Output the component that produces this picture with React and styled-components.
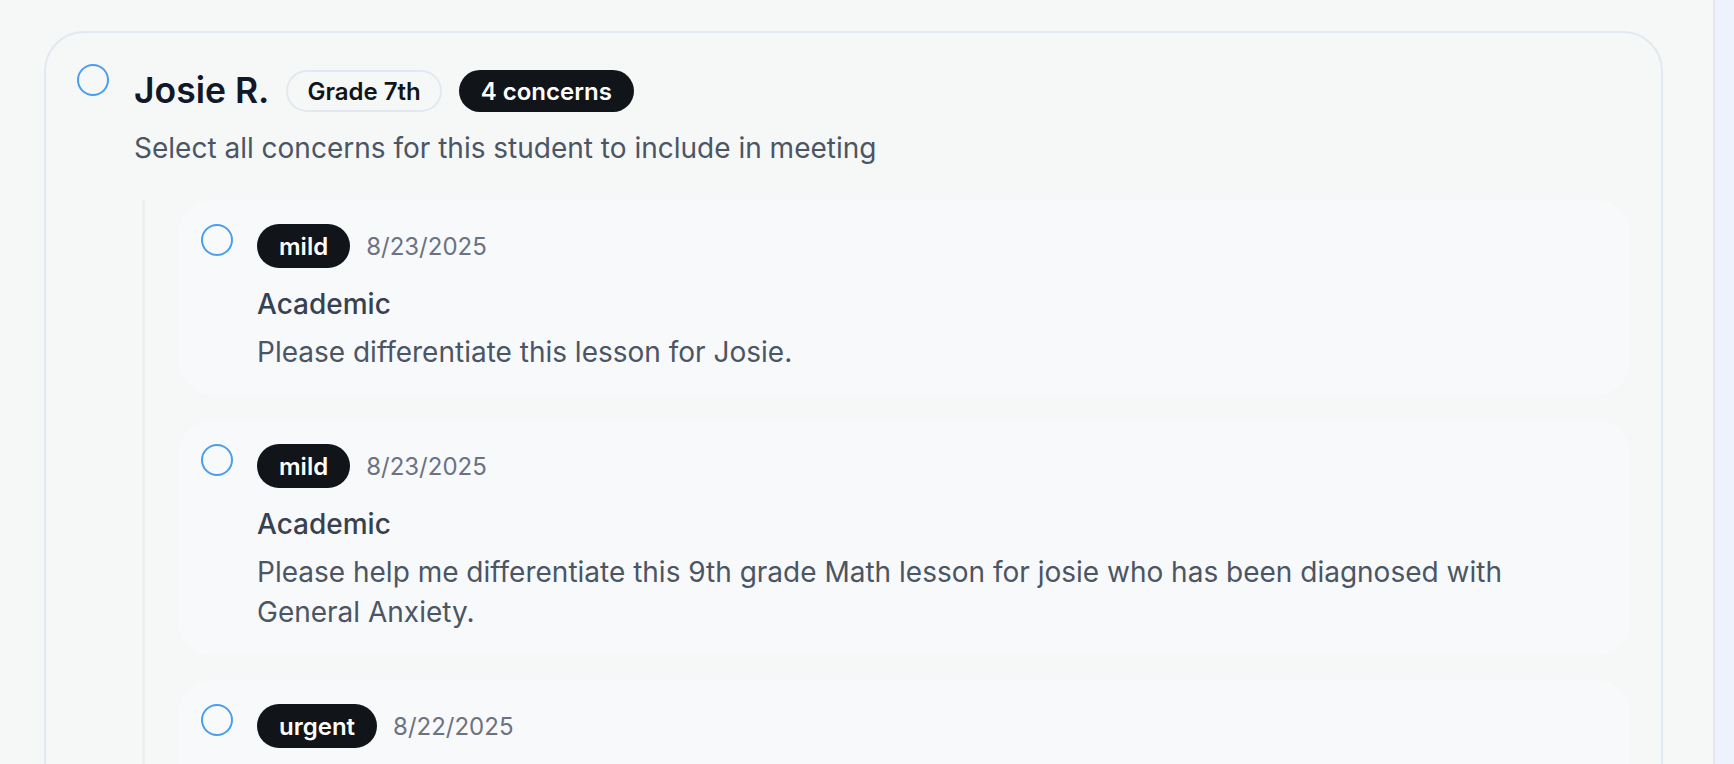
import React from 'react';
import styled, { createGlobalStyle } from 'styled-components';

const GlobalStyle = createGlobalStyle`
  html, body { margin: 0; padding: 0; height: 100%; overflow: hidden; }
  body {
    font-family: Inter, "Noto Sans", "Liberation Sans", sans-serif;
    background: #F6F8F8;
    -webkit-font-smoothing: antialiased;
  }
  #root { height: 100%; }
`;

const Page = styled.div`
  display: flex;
  height: 100vh;
  overflow: hidden;
  background: #F6F8F8;
`;

const Main = styled.main`
  flex: 1;
  min-width: 0;
  padding: 31px 50px 0 44px;
`;

const Aside = styled.aside`
  flex: none;
  width: 19px;
  background: #EEF2FC;
  border-left: 2px solid #E3E7EB;
`;

const StudentCard = styled.section`
  display: flex;
  align-items: flex-start;
  gap: 25px;
  border: 2px solid #E2E8EF;
  border-radius: 40px;
  padding: 31px 30px 31px 31px;
  background: #F6F8F8;
`;

const Radio = styled.span`
  flex: none;
  display: block;
  width: 32px;
  height: 32px;
  box-sizing: border-box;
  border: 2px solid #4A9EEE;
  border-radius: 50%;
`;

const StudentBody = styled.div`
  flex: 1;
  min-width: 0;
`;

const HeaderRow = styled.div`
  display: flex;
  align-items: center;
  gap: 17px;
  height: 54px;
`;

const Name = styled.h2`
  margin: 0;
  font-size: 35.5px;
  font-weight: 600;
  color: #111827;
  line-height: 54px;
`;

const Pill = styled.span`
  display: inline-flex;
  align-items: center;
  box-sizing: border-box;
  height: ${(p) => p.$h}px;
  border-radius: 999px;
  font-size: 24px;
  font-weight: 600;
  white-space: nowrap;
  background: ${(p) => (p.$outline ? 'transparent' : '#111418')};
  color: ${(p) => (p.$outline ? '#111418' : '#FFFFFF')};
  border: ${(p) => (p.$outline ? '2px solid #E2E8EF' : 'none')};
  padding: ${(p) => (p.$outline ? '0 19px' : '0 22px')};
`;

const Subtitle = styled.p`
  margin: 10px 0 0;
  font-size: 28px;
  line-height: 40px;
  color: #4B5563;
`;

const ConcernList = styled.div`
  margin: 32px 0 0 8px;
  border-left: 3px solid #EDF0F2;
  padding-left: 33px;
  display: flex;
  flex-direction: column;
  gap: 25px;
`;

const ConcernCard = styled.article`
  display: flex;
  align-items: flex-start;
  gap: 24px;
  padding: 24px 48px 23px 23px;
  border-radius: 36px;
  background: #F8F9FB;
`;

const ConcernBody = styled.div`
  flex: 1;
  min-width: 0;
`;

const MetaRow = styled.div`
  display: flex;
  align-items: center;
  gap: 16px;
  height: 44px;
`;

const DateText = styled.span`
  font-size: 24px;
  color: #6B7280;
`;

const Category = styled.h3`
  margin: 18px 0 0;
  font-size: 28px;
  font-weight: 500;
  line-height: 36px;
  color: #374151;
`;

const Description = styled.p`
  margin: 10px 0 0;
  font-size: 28px;
  line-height: 40px;
  color: #4B5563;
`;

const concerns = [
  { severity: 'mild', date: '8/23/2025', category: 'Academic', text: 'Please differentiate this lesson for Josie.' },
  {
    severity: 'mild',
    date: '8/23/2025',
    category: 'Academic',
    text: 'Please help me differentiate this 9th grade Math lesson for josie who has been diagnosed with General Anxiety.',
  },
  { severity: 'urgent', date: '8/22/2025', category: 'Behavioral', text: 'Josie left class without permission twice this week.' },
  { severity: 'mild', date: '8/20/2025', category: 'Social', text: 'Josie has been sitting alone during lunch.' },
];

export default function App() {
  return (
    <>
      <GlobalStyle />
      <Page>
        <Main>
          <StudentCard>
            <Radio role="radio" aria-checked="false" />
            <StudentBody>
              <HeaderRow>
                <Name>Josie R.</Name>
                <Pill $outline $h={42}>Grade 7th</Pill>
                <Pill $h={42}>4 concerns</Pill>
              </HeaderRow>
              <Subtitle>Select all concerns for this student to include in meeting</Subtitle>
              <ConcernList>
                {concerns.map((c, i) => (
                  <ConcernCard key={i}>
                    <Radio role="radio" aria-checked="false" />
                    <ConcernBody>
                      <MetaRow>
                        <Pill $h={44}>{c.severity}</Pill>
                        <DateText>{c.date}</DateText>
                      </MetaRow>
                      <Category>{c.category}</Category>
                      <Description>{c.text}</Description>
                    </ConcernBody>
                  </ConcernCard>
                ))}
              </ConcernList>
            </StudentBody>
          </StudentCard>
        </Main>
        <Aside />
      </Page>
    </>
  );
}
